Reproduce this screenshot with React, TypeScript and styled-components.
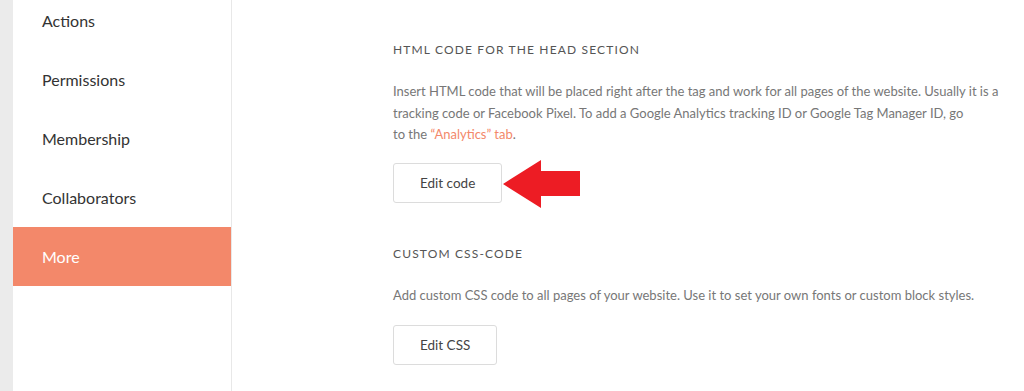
import React from "react";
import styled, { createGlobalStyle } from "styled-components";

const Global = createGlobalStyle`
  html, body { margin: 0; padding: 0; background: #fff; }
  body { font-family: "Lato", "Liberation Sans", sans-serif; }
  * { box-sizing: border-box; }
`;

const Page = styled.div`
  display: flex;
  height: 391px;
  overflow: hidden;
  background: #fff;
`;

const Strip = styled.div`
  width: 13px;
  flex: none;
  background: #ebebeb;
`;

const Sidebar = styled.nav`
  width: 219px;
  flex: none;
  border-right: 1px solid #e8e8e8;
  background: #fff;
  display: flex;
  flex-direction: column;
  margin-top: -9px;
`;

const NavItem = styled.div<{ $active?: boolean }>`
  height: 59px;
  display: flex;
  align-items: center;
  padding-left: 29px;
  font-size: 16px;
  color: ${(p) => (p.$active ? "#fff" : "#333")};
  background: ${(p) => (p.$active ? "#f3886a" : "transparent")};
`;

const Main = styled.main`
  flex: 1;
  padding: 42px 0 0 161px;
`;

const Section = styled.section`
  display: flex;
  flex-direction: column;
  align-items: flex-start;
`;

const Title = styled.h3`
  margin: 0;
  font-size: 12px;
  line-height: 16px;
  font-weight: 400;
  letter-spacing: 1.15px;
  text-transform: uppercase;
  color: #555;
`;

const Text = styled.p<{ $after: number }>`
  margin: 23px 0 ${(p) => p.$after}px;
  white-space: nowrap;
  font-size: 13px;
  line-height: 21.5px;
  color: #777;
`;

const Link = styled.a`
  color: #f3886a;
  text-decoration: none;
`;

const ButtonRow = styled.div`
  position: relative;
`;

const Button = styled.button`
  display: block;
  height: 40px;
  padding: 0 26px;
  border: 1px solid #dcdcdc;
  border-radius: 3px;
  background: #fff;
  font-family: "Lato", "Liberation Sans", sans-serif;
  font-size: 13.5px;
  color: #444;
`;

const Arrow = styled.svg`
  position: absolute;
  left: calc(100% + 1px);
  top: -3px;
`;

const Gap = styled.div`
  height: 43px;
`;

export default function App() {
  return (
    <>
      <Global />
      <Page>
        <Strip />
        <Sidebar>
          <NavItem>Actions</NavItem>
          <NavItem>Permissions</NavItem>
          <NavItem>Membership</NavItem>
          <NavItem>Collaborators</NavItem>
          <NavItem $active>More</NavItem>
        </Sidebar>
        <Main>
          <Section>
            <Title>HTML code for the head section</Title>
            <Text $after={17}>
              Insert HTML code that will be placed right after the tag and work for all pages of the
              website. Usually it is a
              <br />
              tracking code or Facebook Pixel. To add a Google Analytics tracking ID or Google Tag
              Manager ID, go
              <br />
              to the <Link href="#">“Analytics” tab</Link>.
            </Text>
            <ButtonRow>
              <Button>Edit code</Button>
              <Arrow width="77" height="48" viewBox="0 0 77 48">
                <polygon points="0,24 38,0 38,11 77,11 77,36 38,36 38,48" fill="#ed1c24" />
              </Arrow>
            </ButtonRow>
          </Section>
          <Gap />
          <Section>
            <Title>Custom CSS-code</Title>
            <Text $after={19}>
              Add custom CSS code to all pages of your website. Use it to set your own fonts or
              custom block styles.
            </Text>
            <ButtonRow>
              <Button>Edit CSS</Button>
            </ButtonRow>
          </Section>
        </Main>
      </Page>
    </>
  );
}
